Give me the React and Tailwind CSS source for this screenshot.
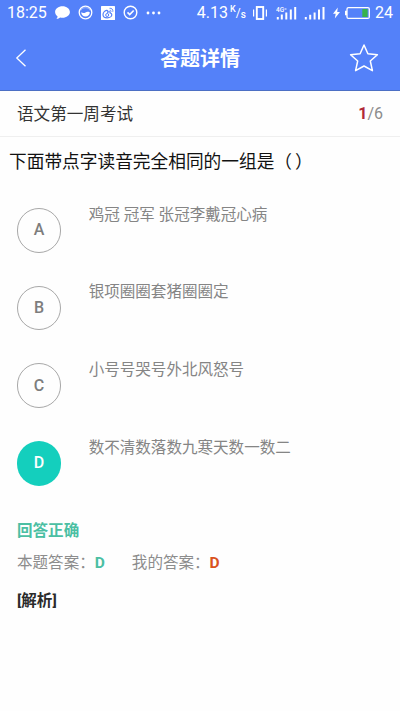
const options = [
  { key: 'A', text: '鸡冠 冠军 张冠李戴冠心病' },
  { key: 'B', text: '银项圈圈套猪圈圈定' },
  { key: 'C', text: '小号号哭号外北风怒号' },
  { key: 'D', text: '数不清数落数九寒天数一数二' },
];

const answer = 'D';
const selected = 'D';

function StatusBar() {
  return (
    <div className="flex h-[25px] items-center pl-[7px] pr-2 text-[16px] leading-none">
      <span className="w-[41px] whitespace-nowrap">18:25</span>

      {/* Notifications */}
      <svg className="ml-[7px] shrink-0" width="15" height="15" viewBox="0 0 15 15" fill="currentColor">
        <path d="M7.5 1.2C3.4 1.2.1 3.7.1 7c0 1.9 1 3.4 2.5 4.5-.1 1-.5 1.8-1.2 2.5 1.6-.1 2.8-.7 3.7-1.5.8.2 1.6.3 2.4.3 4.1 0 7.4-2.6 7.4-5.8S11.6 1.2 7.5 1.2z" />
      </svg>
      <svg className="ml-[8px] shrink-0" width="15" height="15" viewBox="0 0 15 15" fill="none">
        <circle cx="7.5" cy="7.5" r="6.3" stroke="currentColor" strokeWidth="1.3" />
        <path d="M3.2 7.3c1.6 1 3 .9 4.3.1 1.2-.7 2.4-.8 4.3-.1 0 2.5-1.8 4.3-4.3 4.3S3.2 9.8 3.2 7.3z" fill="currentColor" />
        <path d="M2.8 5.5C3.6 3.8 5.2 2.7 7.5 2.7s3.9 1.1 4.7 2.8" stroke="currentColor" strokeWidth=".7" opacity=".6" />
      </svg>
      <svg className="ml-[8px] shrink-0" width="14" height="14" viewBox="0 0 14 14" fill="none">
        <rect width="14" height="14" rx=".6" fill="currentColor" />
        <path d="M5.7 4.3C3.8 4.7 2 6.7 2 8.7c0 2 2 3.1 4.3 3.1 2.6 0 4.5-1.5 4.5-3.1 0-1.1-.8-1.5-1.6-1.7.3-1-.5-1.7-2.5-.8.3-1.3 0-2-1-1.9z" stroke="#5481f9" strokeWidth="1.2" />
        <circle cx="6.2" cy="9" r="1.5" stroke="#5481f9" strokeWidth="1" />
        <path d="M8.5 2.3c2.2-.4 3.8 1.2 3.3 3.5M8.7 4.3c1-.1 1.5.4 1.4 1.4" stroke="#5481f9" strokeWidth=".9" />
      </svg>
      <svg className="ml-[8px] shrink-0" width="15" height="15" viewBox="0 0 15 15" fill="none" stroke="currentColor">
        <circle cx="7.5" cy="7.5" r="6.3" strokeWidth="1.4" />
        <path d="M4.5 7.4l2.2 2.2 4-4.1" strokeWidth="1.6" />
      </svg>
      <svg className="ml-[8px] shrink-0" width="15" height="4" viewBox="0 0 15 4" fill="currentColor">
        <circle cx="2" cy="2" r="1.4" />
        <circle cx="7.5" cy="2" r="1.4" />
        <circle cx="13" cy="2" r="1.4" />
      </svg>

      {/* System */}
      <span className="ml-auto">4.13</span>
      <span className="ml-[2px] flex h-[15px] w-[16px] shrink-0 text-[9px] font-medium leading-none">
        <span>K</span>
        <span className="pt-[2px] text-[12px] font-normal">/</span>
        <span className="pt-[5px] text-[10px]">s</span>
      </span>
      <svg className="ml-[7px] shrink-0" width="14" height="14" viewBox="0 0 14 14" fill="none" stroke="currentColor">
        <rect x="3.8" y="1" width="6.4" height="12" strokeWidth="1.9" />
        <path d="M.6 3.5v7M13.4 3.5v7" strokeWidth="1.2" />
      </svg>
      <svg className="ml-[9px] shrink-0" width="21" height="14" viewBox="0 0 21 14" fill="currentColor">
        <path d="M.8 11h2v2.5h-2zM4.8 8.5h2v5h-2zM9.3 6.5h2v7h-2zM13.8 3.5h2v10h-2zM18.2 1h2v12.5h-2z" />
        <text x="0" y="5.5" fontSize="6.5" fontWeight="500">4G</text>
        <path d="M8.5 2.5h2v1h-2z" />
      </svg>
      <svg className="ml-[7px] shrink-0" width="21" height="14" viewBox="0 0 21 14" fill="currentColor">
        <path d="M.8 11h2v2.5h-2zM5.2 8.7h2v4.8h-2zM9.6 6.5h2v7h-2zM14 3.5h2v10h-2zM18.5 1h2v12.5h-2z" />
      </svg>
      <svg className="ml-[8px] shrink-0" width="7" height="12" viewBox="0 0 7 12" fill="currentColor">
        <path d="M4.8.5L0 6.7h2.7L1.8 11.5 7 5H4.2z" />
      </svg>
      <svg className="ml-[5px] shrink-0" width="25" height="14" viewBox="0 0 25 14" fill="none">
        <path d="M0 4.7h2v4.6H0z" fill="currentColor" />
        <rect x="2" y="1.6" width="22.3" height="10.8" rx="1.5" stroke="currentColor" strokeWidth="1.3" />
        <path d="M17.3 3h5.3v8h-5.3z" fill="#36b24c" />
      </svg>
      <span className="ml-[5px] w-[17px] whitespace-nowrap">24</span>
    </div>
  );
}

function Header() {
  return (
    <header className="h-[91px] border-b border-[#4c6fc4] bg-[#5481f9] text-white">
      <StatusBar />
      <div className="flex h-[65px] items-center justify-between pl-[15px] pr-[21px]">
        <button className="w-[36px]">
          <svg width="12" height="18" viewBox="0 0 12 18" fill="none" stroke="currentColor" strokeWidth="1.3">
            <path d="M10.5.8L1.8 9l8.7 8.2" />
          </svg>
        </button>
        <h1 className="pt-[2px] text-[20px] font-bold leading-none">答题详情</h1>
        <button className="w-[30px]">
          <svg width="30" height="30" viewBox="0 0 30 30" fill="none" stroke="currentColor" strokeWidth="1.5" strokeLinejoin="round">
            <path d="M15 2l3.9 8.7 9.5 1-7.1 6.3 2.1 9.7L15 23l-8.4 4.7L8.7 18 1.6 11.7l9.5-1z" />
          </svg>
        </button>
      </div>
    </header>
  );
}

function Option({ label, text, active }) {
  return (
    <li className="flex h-[77.7px] items-start">
      <span
        className={
          active
            ? 'flex size-[44.5px] shrink-0 items-center justify-center rounded-full bg-[#14cfbd] text-[16px] font-medium text-white'
            : 'flex size-[44.5px] shrink-0 items-center justify-center rounded-full border border-[#a8a8a8] text-[16px] font-medium text-[#7d7d7d]'
        }
      >
        {label}
      </span>
      <span className="-mt-[5.5px] ml-[27.5px] text-[15.55px] leading-[24px] text-[#858585]">{text}</span>
    </li>
  );
}

export default function App() {
  return (
    <div className="h-[711px] w-full overflow-hidden bg-[#fefefe] font-[Roboto,'Noto_Sans_CJK_SC',sans-serif]">
      <Header />

      <div className="flex h-[46px] items-center justify-between border-b border-[#efefef] px-[17px]">
        <h2 className="pt-[3px] text-[16.6px] text-[#333]">语文第一周考试</h2>
        <span className="text-[16px] text-[#8c8c8c]">
          <b className="text-[#b02a37]">1</b>/6
        </span>
      </div>

      <p className="h-[71px] whitespace-nowrap pl-[9px] pt-[12px] text-[17.7px] leading-[26px] text-[#111] [word-spacing:-1.5px]">
        下面带点字读音完全相同的一组是（ ）
      </p>

      <ul className="pl-[16.7px]">
        {options.map((o) => (
          <Option key={o.key} label={o.key} text={o.text} active={o.key === selected} />
        ))}
      </ul>

      {/* Result */}
      <div className="pl-[17px] text-[15.55px] leading-[24px]">
        <p className="font-bold text-[#4bbfa3]">回答正确</p>
        <div className="mt-[8px] flex gap-[27px] text-[#8c8c8c]">
          <p>
            本题答案：<b className="text-[#4bbfa3]">{answer}</b>
          </p>
          <p>
            我的答案：<b className="text-[#d9531e]">{selected}</b>
          </p>
        </div>
        <p className="mt-[14px] font-bold text-[#2b2b2b]">[解析]</p>
      </div>
    </div>
  );
}
